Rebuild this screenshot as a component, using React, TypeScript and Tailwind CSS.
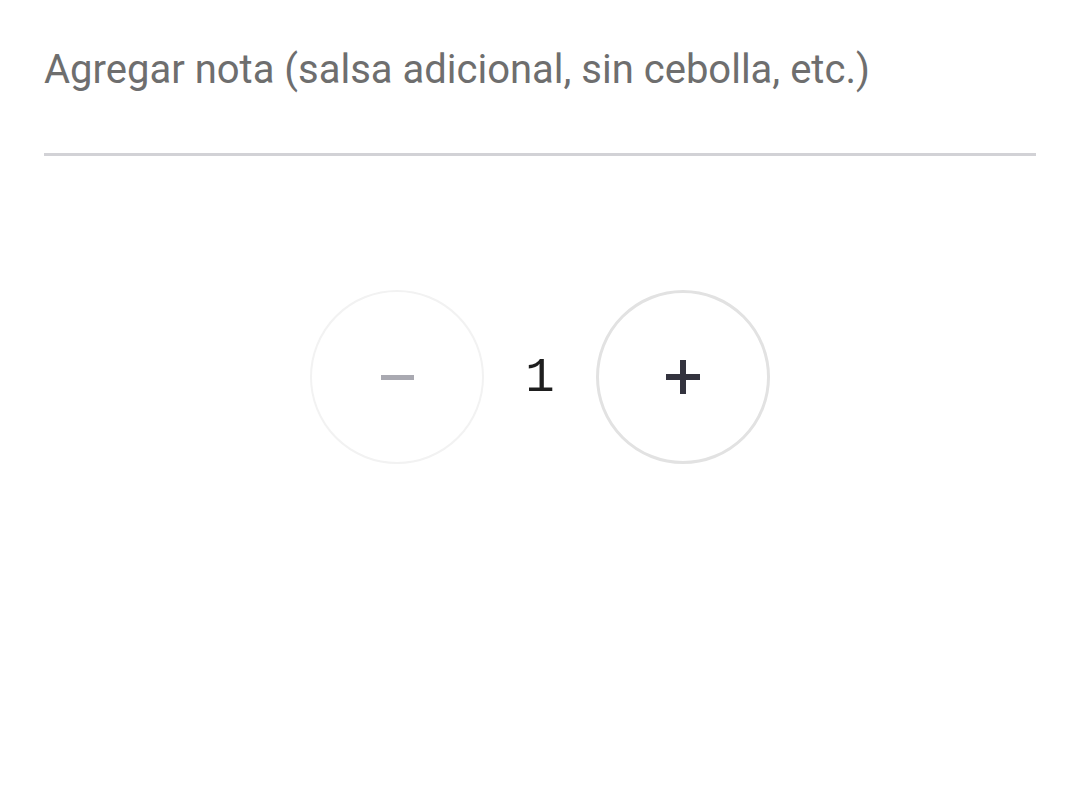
import React, { useState } from 'react'

const App: React.FC = () => {
  const [qty, setQty] = useState(1)

  return (
    <div className="w-[1080px] h-[808px] bg-white font-['Roboto',sans-serif]">
      {/* Note field */}
      <div className="px-[44px] pt-[44px]">
        <div className="border-b-[3px] border-[#d2d2d6] pb-[57px]">
          <p className="text-[40px] leading-[52px] text-[#6e6e6e] whitespace-nowrap">
            Agregar nota (salsa adicional, sin cebolla, etc.)
          </p>
        </div>
      </div>

      {/* Quantity stepper */}
      <div className="flex items-center justify-center mt-[134px]">
        <button
          className="w-[174px] h-[174px] rounded-full border-2 border-[#f2f2f2] flex items-center justify-center"
          onClick={() => setQty(Math.max(1, qty - 1))}
        >
          <span className="block w-[33px] h-[5px] bg-[#a9a9b1]" />
        </button>
        <span className="w-[112px] text-center text-[49px] leading-none text-[#1e1e1e] font-['Liberation_Mono',monospace] pt-[2px]">
          {qty}
        </span>
        <button
          className="w-[174px] h-[174px] rounded-full border-[3px] border-[#e2e2e2] flex items-center justify-center"
          onClick={() => setQty(qty + 1)}
        >
          <svg width="34" height="34" viewBox="0 0 34 34">
            <rect x="0" y="14" width="34" height="6" fill="#33333e" />
            <rect x="14" y="0" width="6" height="34" fill="#33333e" />
          </svg>
        </button>
      </div>
    </div>
  )
}

export default App
